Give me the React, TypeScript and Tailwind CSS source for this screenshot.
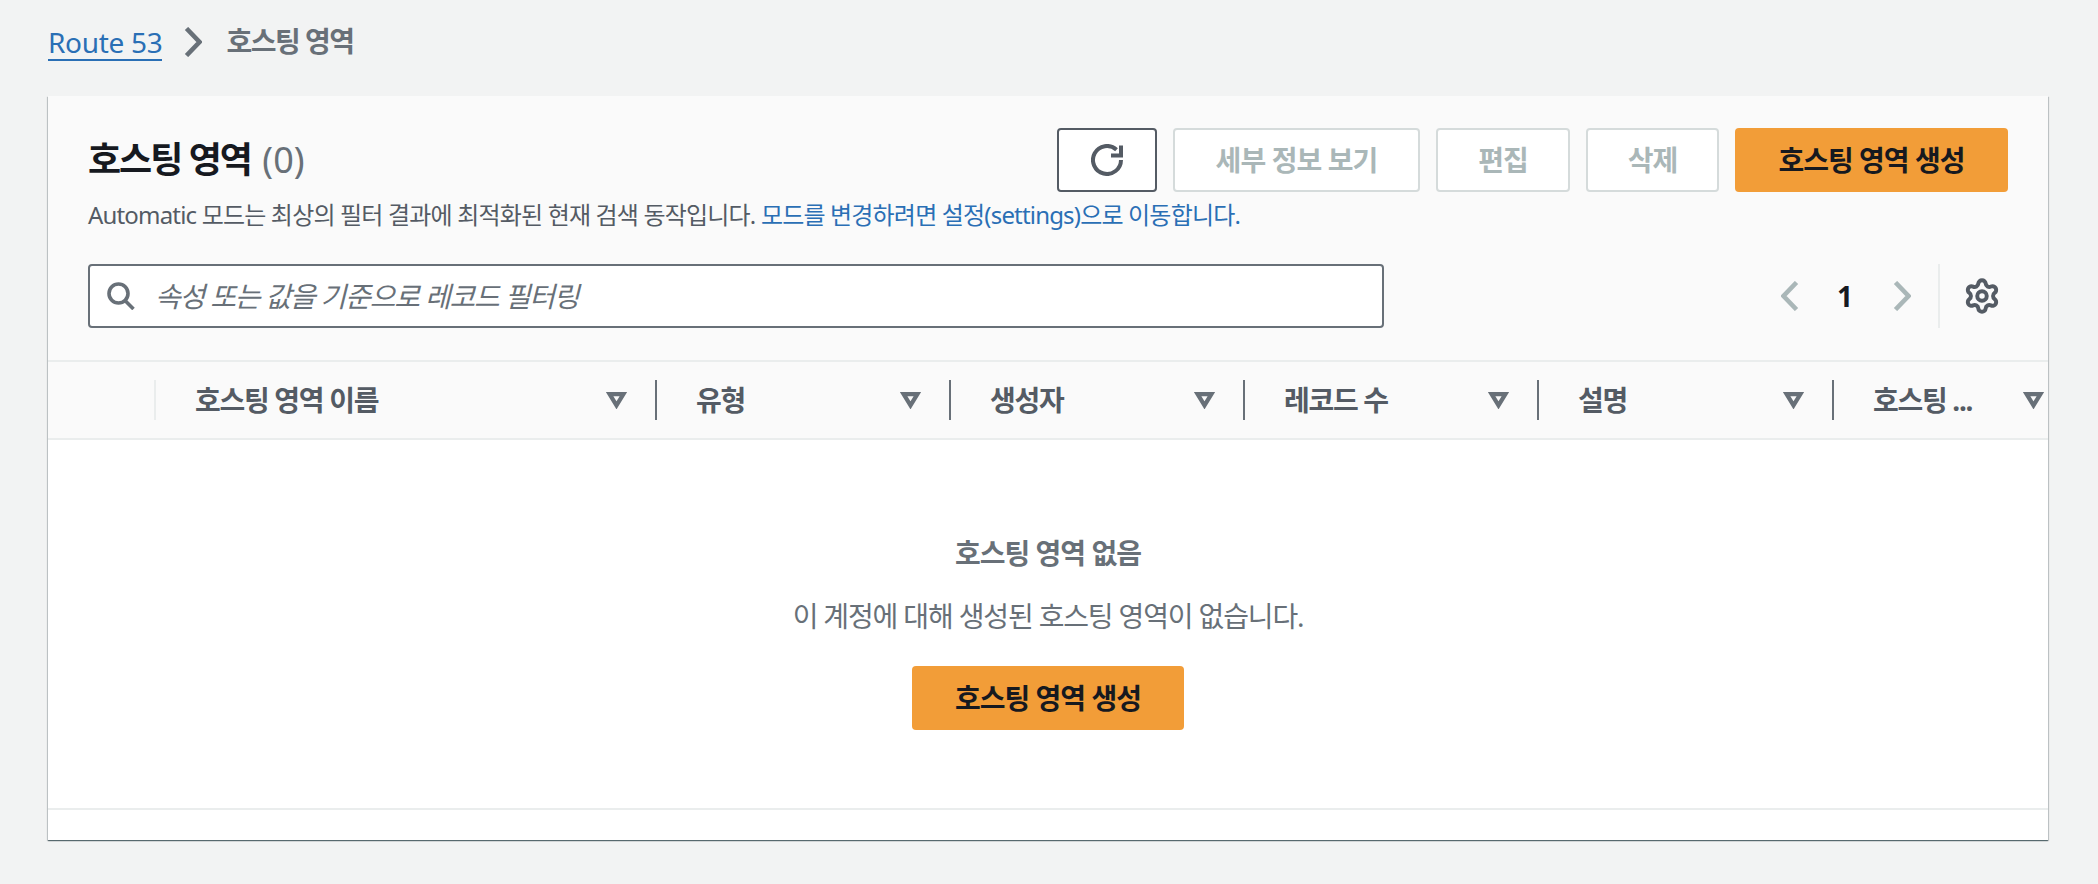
import { Settings } from "lucide-react";

const FONT = "font-['Noto_Sans','Noto_Sans_CJK_KR',sans-serif]";

function SortIcon() {
  return (
    <svg viewBox="0 0 21 17" className="w-[21px] h-[17px] shrink-0" fill="none" stroke="#687078" strokeWidth="4.2" strokeLinejoin="miter">
      <path d="M3.6 2.1h13.8L10.5 13.4z" />
    </svg>
  );
}

function Chevron({ dir, color, className }: { dir: "left" | "right"; color: string; className: string }) {
  return (
    <svg viewBox="0 0 18 30" className={className} fill="none" stroke={color} strokeWidth="4.6">
      <path d={dir === "right" ? "M2.5 1.5L15.5 15L2.5 28.5" : "M15.5 1.5L2.5 15L15.5 28.5"} />
    </svg>
  );
}

function ColHead({ label, width, border = "bg-[#687078]" }: { label: string; width: string; border?: string }) {
  return (
    <div className={`${width} shrink-0 h-10 flex items-center`}>
      <div className={`w-[2px] h-10 shrink-0 ${border}`} />
      <span className="ml-[39px] text-[28px] font-bold text-[#545b64] tracking-[-1.3px] whitespace-nowrap">{label}</span>
      <div className="flex-1" />
      <SortIcon />
      <div className="w-[28px] shrink-0" />
    </div>
  );
}

function ToolButton({ label, width }: { label: string; width: string }) {
  return (
    <button className={`${width} h-16 rounded border-2 border-[#d5dbdb] bg-white text-[28px] font-bold text-[#aab7b8] tracking-[-0.9px]`}>
      {label}
    </button>
  );
}

function PrimaryButton({ width }: { width: string }) {
  return (
    <button className={`${width} h-16 rounded bg-[#f29d38] text-[28px] font-bold text-[#16191f] tracking-[-1px]`}>
      호스팅 영역 생성
    </button>
  );
}

export default function App() {
  return (
    <div className={`w-[2098px] h-[884px] overflow-hidden bg-[#f2f3f3] px-12 pt-6 ${FONT}`}>
      {/* 상단 경로 */}
      <nav className="h-[72px] flex items-start">
        <a className="mt-[1px] h-[36px] border-b-[2px] border-[#2a6fb5] text-[28px] leading-[34px] text-[#2a6fb5] tracking-[-0.3px]">Route 53</a>
        <Chevron dir="right" color="#687078" className="w-[18px] h-[30px] ml-[22px] mt-[3px]" />
        <span className="ml-[24px] text-[28px] leading-[34px] font-bold text-[#687078] tracking-[-1.5px]">호스팅 영역</span>
      </nav>

      <div className="w-[2000px] h-[744px] flex flex-col bg-white shadow-[0_1px_1px_0_rgba(0,28,36,0.5),1px_1px_1px_0_rgba(0,28,36,0.15),-1px_1px_1px_0_rgba(0,28,36,0.15)]">
        {/* 헤더 */}
        <div className="h-[264px] shrink-0 bg-[#fafafa] px-10 pt-8 flex flex-col">
          <div className="h-16 flex items-center">
            <h1 className="text-[36px] font-bold text-[#16191f] tracking-[-2px]">
              호스팅 영역 <span className="ml-[4px] font-normal text-[#687078] tracking-normal">(0)</span>
            </h1>
            <div className="flex-1" />
            <div className="flex gap-[16px]">
              <button className="w-[100px] h-16 rounded border-2 border-[#545b64] bg-white flex items-center justify-center">
                <svg viewBox="0 0 32 32" className="w-8 h-8" fill="none" stroke="#545b64" strokeWidth="4">
                  <path d="M30 16A14 14 0 1 1 25.5 5.7" />
                  <path d="M30 1.5V11.5H20" />
                </svg>
              </button>
              <ToolButton label="세부 정보 보기" width="w-[247px]" />
              <ToolButton label="편집" width="w-[134px]" />
              <ToolButton label="삭제" width="w-[133px]" />
              <PrimaryButton width="w-[273px]" />
            </div>
          </div>
          <p className="mt-[3px] text-[24px] leading-[40px] text-[#545b64] tracking-[-0.82px] whitespace-nowrap">
            Automatic 모드는 최상의 필터 결과에 최적화된 현재 검색 동작입니다. <a className="text-[#2a6fb5]">모드를 변경하려면 설정(settings)으로 이동합니다.</a>
          </p>
          <div className="mt-[29px] h-16 flex items-center">
            <div className="w-[1296px] h-16 rounded border-2 border-[#687078] bg-white flex items-center pl-[17px]">
              <svg viewBox="0 0 28 28" className="w-[28px] h-[28px] shrink-0" fill="none" stroke="#687078" strokeWidth="3.6">
                <circle cx="11.5" cy="11.5" r="9.5" />
                <path d="M18 18.5l8.5 8.5" />
              </svg>
              <span className="ml-[20px] text-[28px] italic text-[#687078] tracking-[-1.2px]">속성 또는 값을 기준으로 레코드 필터링</span>
            </div>
            <div className="flex-1" />
            <Chevron dir="left" color="#aab7b8" className="w-[18px] h-[30px]" />
            <span className="w-[26px] ml-[33px] text-[28px] font-bold text-[#16191f] text-center">1</span>
            <Chevron dir="right" color="#aab7b8" className="w-[18px] h-[30px] ml-[35px]" />
            <div className="w-[2px] h-16 ml-[27px] bg-[#eaeded]" />
            <Settings className="w-[38px] h-[38px] ml-[23px] mr-[7px] text-[#545b64]" strokeWidth={2.5} />
          </div>
        </div>

        {/* 표 헤더 */}
        <div className="h-[80px] shrink-0 bg-[#fafafa] border-y-[2px] border-[#eaeded] flex items-center overflow-hidden">
          <div className="w-[106px] shrink-0" />
          <ColHead label="호스팅 영역 이름" width="w-[501px]" border="bg-[#eaeded]" />
          <ColHead label="유형" width="w-[294px]" />
          <ColHead label="생성자" width="w-[294px]" />
          <ColHead label="레코드 수" width="w-[294px]" />
          <ColHead label="설명" width="w-[295px]" />
          <div className="w-[216px] shrink-0 h-10 flex items-center">
            <div className="w-[2px] h-10 shrink-0 bg-[#687078]" />
            <span className="ml-[39px] text-[28px] font-bold text-[#545b64] tracking-[-1.3px] whitespace-nowrap">호스팅 ...</span>
            <div className="flex-1" />
            <SortIcon />
            <div className="w-[4px] shrink-0" />
          </div>
        </div>

        {/* 빈 상태 */}
        <div className="h-[368px] shrink-0 flex flex-col items-center pt-[92px]">
          <div className="text-[28px] leading-[42px] font-bold text-[#687078] tracking-[-1px]">호스팅 영역 없음</div>
          <div className="mt-[21px] text-[28px] leading-[42px] text-[#687078] tracking-[-1.15px]">이 계정에 대해 생성된 호스팅 영역이 없습니다.</div>
          <div className="mt-[29px]">
            <PrimaryButton width="w-[272px]" />
          </div>
        </div>
        <div className="flex-1 border-t-[2px] border-[#eaeded]" />
      </div>
    </div>
  );
}
